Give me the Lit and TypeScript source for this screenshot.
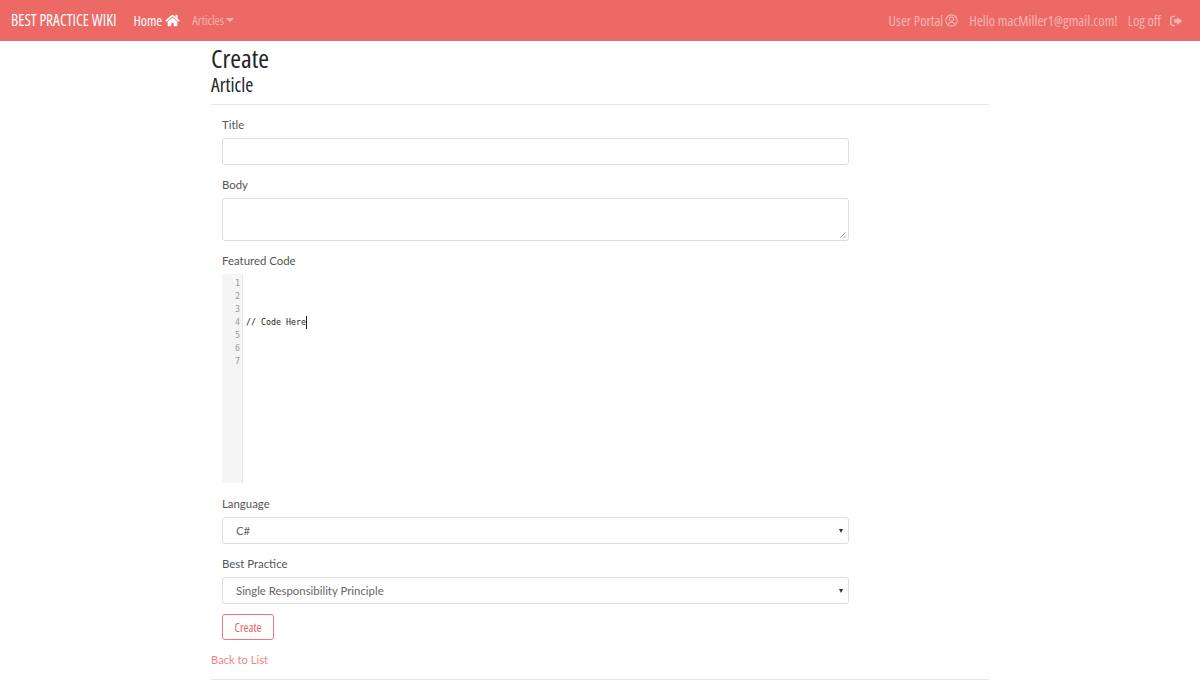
import { LitElement, html, css } from "lit";
import { customElement } from "lit/decorators.js";

@customElement("app-root")
export class AppRoot extends LitElement {
  static styles = css`
    :host { display: block; font-family: Lato, "Open Sans", sans-serif; color: #555; height: 680px; overflow: hidden; background: #fff; }
    .nav { height: 41px; background: #ec6966; display: flex; align-items: center; padding: 0 17px 0 11px; box-sizing: border-box; font-family: "Open Sans", sans-serif; font-stretch: 75%; font-size: 14.4px; }
    .brand { color: #fff; margin-right: 17px; font-weight: 500; font-size: 15.4px; }
    .home { color: #fff; display: flex; align-items: center; gap: 3px; margin-right: 12px; font-weight: 500; font-size: 14px; }
    .muted { color: #f7b4b2; }
    .articles { font-size: 12.8px; display: flex; align-items: center; gap: 2px; margin-top: -2px; }
    .caret { width: 0; height: 0; border-left: 4px solid transparent; border-right: 4px solid transparent; border-top: 4px solid #f7b4b2; }
    .spacer { flex: 1; }
    .right { display: flex; align-items: center; }
    .right span { display: flex; align-items: center; gap: 2px; }
    .portal { margin-right: 11px; }
    .hello { margin-right: 10px; }
    .right .logoff { gap: 9px; }
    main { width: 778px; margin-left: 211px; }
    h1 { margin: 0; font: 400 26px/34px "Open Sans", sans-serif; font-stretch: 75%; color: #212529; }
    h2 { margin: 0; font: 400 19.5px/20px "Open Sans", sans-serif; font-stretch: 75%; color: #212529; }
    hr { border: 0; border-top: 1px solid #e6e6e6; margin: 0; }
    .head-rule { margin-top: 9px; }
    form { width: 627px; margin-left: 11px; padding-top: 11px; }
    .label { display: block; font-size: 11.4px; line-height: 18px; color: #555; margin-bottom: 4px; }
    .field { box-sizing: border-box; width: 100%; border: 1px solid #ddd; border-radius: 3px; display: block; background: #fff; }
    .input { height: 27px; margin-bottom: 11px; }
    .textarea { height: 43px; margin-bottom: 11px; position: relative; }
    .grip { position: absolute; right: 1px; bottom: 1px; display: block; }
    .editor { height: 209px; display: flex; margin-bottom: 12px; font: 8.3px/13px "DejaVu Sans Mono", monospace; }
    .gutter { width: 21px; background: #f5f5f5; border-right: 1px solid #e8e8e8; box-sizing: border-box; color: #999; text-align: right; padding: 3px 2px 0 0; }
    .code { padding: 42px 0 0 3px; color: #222; display: flex; align-items: flex-start; }
    .cursor { width: 1px; height: 13px; background: #222; }
    .select { height: 27px; display: flex; align-items: center; justify-content: space-between; padding: 0 5px 0 13px; font-size: 11.4px; color: #666; }
    .lang { margin-bottom: 11px; }
    .arrow { width: 0; height: 0; border-left: 2px solid transparent; border-right: 2px solid transparent; border-top: 4px solid #333; }
    .btn { box-sizing: border-box; display: flex; align-items: center; justify-content: center; width: 52px; height: 26px; margin-top: 10px; border: 1px solid #ee7a77; border-radius: 3px; color: #e8605d; font: 12px "Open Sans", sans-serif; font-stretch: 75%; background: #fff; }
    .back { display: block; margin-top: 11px; font-size: 11.2px; line-height: 18px; color: #ee8583; }
    .foot-rule { margin-top: 10px; }
  `;

  render() {
    return html`
      <div class="nav">
        <span class="brand">BEST PRACTICE WIKI</span>
        <span class="home">Home
          <svg width="15" height="13" viewBox="0 0 576 512" fill="#fff"><path d="M280.4 148.3 96 300.1V464a16 16 0 0 0 16 16l112-.3a16 16 0 0 0 16-16V368a16 16 0 0 1 16-16h64a16 16 0 0 1 16 16v95.6a16 16 0 0 0 16 16l112 .4a16 16 0 0 0 16-16V300L295.7 148.3a12.2 12.2 0 0 0-15.3 0zM571.6 251.5 488 182.6V44a12 12 0 0 0-12-12h-56a12 12 0 0 0-12 12v72.6L318.5 43a48 48 0 0 0-61 0L4.3 251.5a12 12 0 0 0-1.6 16.9l25.5 31a12 12 0 0 0 16.9 1.6l235.2-193.7a12.2 12.2 0 0 1 15.3 0L530.9 301a12 12 0 0 0 16.9-1.6l25.5-31a12 12 0 0 0-1.7-16.9z"/></svg>
        </span>
        <span class="articles muted">Articles <i class="caret"></i></span>
        <span class="spacer"></span>
        <div class="right muted">
          <span class="portal">User Portal
            <svg width="13" height="13" viewBox="0 0 16 16" fill="none" stroke="#f7b4b2" stroke-width="1.4"><circle cx="8" cy="8" r="7"/><circle cx="8" cy="6.3" r="2.6"/><path d="M3.6 13c1-2 2.6-2.8 4.4-2.8s3.4.8 4.4 2.8"/></svg>
          </span>
          <span class="hello">Hello macMiller1@gmail.com!</span>
          <span class="logoff">Log off
            <svg width="13" height="12" viewBox="0 0 16 14"><path d="M6 1.5H3.5A2.5 2.5 0 0 0 1 4v6a2.5 2.5 0 0 0 2.5 2.5H6" fill="none" stroke="#f7b4b2" stroke-width="1.8"/><path d="M9 2l6 5-6 5V9.3H5V4.7h4z" fill="#f7b4b2"/></svg>
          </span>
        </div>
      </div>
      <main>
        <h1>Create</h1>
        <h2>Article</h2>
        <hr class="head-rule" />
        <form>
          <label class="label">Title</label>
          <div class="field input"></div>
          <label class="label">Body</label>
          <div class="field textarea">
            <svg class="grip" width="9" height="9" viewBox="0 0 9 9" stroke="#aaa" stroke-width="1"><path d="M2 8 8 2M5.5 8 8 5.5"/></svg>
          </div>
          <label class="label">Featured Code</label>
          <div class="editor">
            <div class="gutter">1<br />2<br />3<br />4<br />5<br />6<br />7</div>
            <div class="code"><span>// Code Here</span><i class="cursor"></i></div>
          </div>
          <label class="label">Language</label>
          <div class="field select lang"><span>C#</span><i class="arrow"></i></div>
          <label class="label">Best Practice</label>
          <div class="field select"><span>Single Responsibility Principle</span><i class="arrow"></i></div>
          <div class="btn">Create</div>
        </form>
        <span class="back">Back to List</span>
        <hr class="foot-rule" />
      </main>
    `;
  }
}
